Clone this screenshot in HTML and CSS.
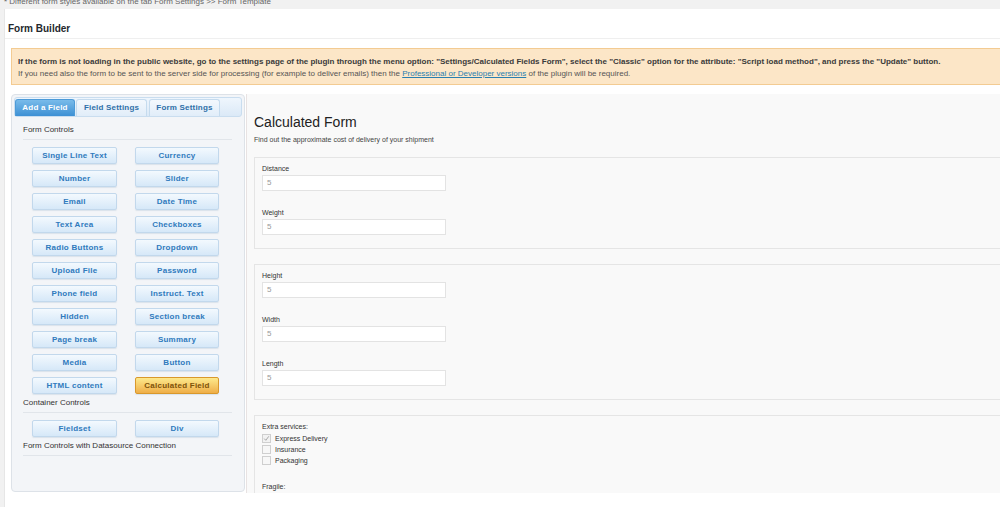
FILE: index.html
```html
<!DOCTYPE html>
<html>
<head>
<meta charset="utf-8">
<link rel="stylesheet" href="styles.css">
</head>
<body>
<div class="topnote">* Different form styles available on the tab Form Settings &gt;&gt; Form Template</div>
<div class="wrap">
  <div class="hdr"><h2 class="hdr-title">Form Builder</h2></div>
  <div class="inner">
    <div class="notice">
      <p class="notice-b">If the form is not loading in the public website, go to the settings page of the plugin through the menu option: "Settings/Calculated Fields Form", select the "Classic" option for the attribute: "Script load method", and press the "Update" button.</p>
      <p class="notice-r">If you need also the form to be sent to the server side for processing (for example to deliver emails) then the <a class="notice-link">Professional or Developer versions</a> of the plugin will be required.</p>
    </div>
    <div class="builder">
      <div class="tabs-panel">
        <div class="tabbar">
          <span class="tab tab-active tab-w1">Add a Field</span>
          <span class="tab tab-w2">Field Settings</span>
          <span class="tab tab-w3">Form Settings</span>
        </div>
        <div class="controls">
          <div class="group-title group-first">Form Controls</div>
          <div class="btns">
            <span class="btn">Single Line Text</span>
            <span class="btn">Currency</span>
            <span class="btn">Number</span>
            <span class="btn">Slider</span>
            <span class="btn">Email</span>
            <span class="btn">Date Time</span>
            <span class="btn">Text Area</span>
            <span class="btn">Checkboxes</span>
            <span class="btn">Radio Buttons</span>
            <span class="btn">Dropdown</span>
            <span class="btn">Upload File</span>
            <span class="btn">Password</span>
            <span class="btn">Phone field</span>
            <span class="btn">Instruct. Text</span>
            <span class="btn">Hidden</span>
            <span class="btn">Section break</span>
            <span class="btn">Page break</span>
            <span class="btn">Summary</span>
            <span class="btn">Media</span>
            <span class="btn">Button</span>
            <span class="btn">HTML content</span>
            <span class="btn btn-calc">Calculated Field</span>
          </div>
          <div class="group-title">Container Controls</div>
          <div class="btns">
            <span class="btn">Fieldset</span>
            <span class="btn">Div</span>
          </div>
          <div class="group-title">Form Controls with Datasource Connection</div>
        </div>
      </div>
      <div class="preview">
        <h1 class="form-title">Calculated Form</h1>
        <p class="form-sub">Find out the approximate cost of delivery of your shipment</p>
        <div class="fset">
          <div class="field">
            <div class="flabel">Distance</div>
            <div class="finput">5</div>
          </div>
          <div class="field">
            <div class="flabel">Weight</div>
            <div class="finput">5</div>
          </div>
        </div>
        <div class="fset">
          <div class="field">
            <div class="flabel">Height</div>
            <div class="finput">5</div>
          </div>
          <div class="field">
            <div class="flabel">Width</div>
            <div class="finput">5</div>
          </div>
          <div class="field">
            <div class="flabel">Length</div>
            <div class="finput">5</div>
          </div>
        </div>
        <div class="fset">
          <div class="flabel">Extra services:</div>
          <div class="chk-row">
            <svg class="chk" width="9" height="9" viewBox="0 0 9 9"><rect x="0.5" y="0.5" width="8" height="8" fill="#f2f2f2" stroke="#cfcfcf"/><polyline points="2.2,4.6 3.8,6.3 6.8,2.3" fill="none" stroke="#a8a8a8" stroke-width="1"/></svg>
            <span class="chk-label">Express Delivery</span>
          </div>
          <div class="chk-row">
            <svg class="chk" width="9" height="9" viewBox="0 0 9 9"><rect x="0.5" y="0.5" width="8" height="8" fill="#f7f7f7" stroke="#cfcfcf"/></svg>
            <span class="chk-label">Insurance</span>
          </div>
          <div class="chk-row">
            <svg class="chk" width="9" height="9" viewBox="0 0 9 9"><rect x="0.5" y="0.5" width="8" height="8" fill="#f7f7f7" stroke="#cfcfcf"/></svg>
            <span class="chk-label">Packaging</span>
          </div>
          <div class="flabel flabel-fragile">Fragile:</div>
        </div>
      </div>
    </div>
  </div>
</div>
</body>
</html>
```

FILE: styles.css
```css
html, body {
  margin: 0;
  padding: 0;
  overflow: hidden;
}
body {
  background: #f1f1f1;
  font-family: "Liberation Sans", Arial, sans-serif;
  color: #333;
  width: 1000px;
  height: 507px;
}
.topnote {
  margin-top: -3px;
  height: 12px;
  line-height: 10px;
  padding-left: 4px;
  font-size: 8px;
  color: #666;
  white-space: nowrap;
}
.wrap {
  margin-left: 4px;
  width: 1200px;
  height: 499px;
  background: #fff;
  border-left: 1px solid #e6e6e6;
}
.hdr {
  height: 30px;
  box-sizing: border-box;
  padding: 13px 0 0 3px;
  border-bottom: 1px solid #efefef;
}
.hdr-title {
  margin: 0;
  font-size: 10px;
  line-height: 14px;
  font-weight: bold;
  color: #23282d;
}
.inner {
  padding-left: 6px;
}
.notice {
  margin-top: 9px;
  width: 1100px;
  background: #fce6c7;
  border: 1px solid #f3cb92;
  padding: 7px 6px 5px;
  font-size: 8px;
  white-space: nowrap;
}
.notice p {
  margin: 0;
}
.notice-b {
  font-weight: bold;
  line-height: 12px;
  color: #3a3a3a;
}
.notice-r {
  line-height: 11px;
  color: #555;
}
.notice-link {
  color: #2a7fb0;
  text-decoration: underline;
}
.builder {
  margin-top: 9px;
  display: flex;
  align-items: flex-start;
}
.tabs-panel {
  width: 234px;
  height: 398px;
  box-sizing: border-box;
  border: 1px solid #dde2e8;
  border-radius: 4px;
  background: #f3f5f8;
  padding: 2px;
  flex: none;
}
.tabbar {
  height: 20px;
  box-sizing: border-box;
  border: 1px solid #c9ddef;
  border-radius: 3px;
  background: linear-gradient(#eff6fd, #dbe9f7);
  padding: 1px 0 0 0;
  display: flex;
  gap: 1px;
}
.tab {
  height: 17px;
  box-sizing: border-box;
  border: 1px solid #c5dbee;
  border-bottom: none;
  border-radius: 3px 3px 0 0;
  background: linear-gradient(#f3f8fd, #e1edf9);
  color: #2e6fa8;
  font-size: 8px;
  font-weight: bold;
  line-height: 16px;
  text-align: center;
  letter-spacing: 0.2px;
}
.tab-active {
  background: linear-gradient(#79bbea, #3d90d4);
  border-color: #4d9bd8;
  color: #fff;
}
.tab-w1 { width: 60px; }
.tab-w2 { width: 71px; }
.tab-w3 { width: 71px; margin-left: 1px; }
.controls {
  padding: 0 10px 0 9px;
}
.group-title {
  margin-top: 4px;
  padding-bottom: 4px;
  border-bottom: 1px solid #e1e5ea;
  font-size: 8px;
  line-height: 10px;
  color: #333;
}
.group-first {
  margin-top: 8px;
  padding-bottom: 4px;
}
.btns {
  margin-top: 7px;
  padding-left: 9px;
  display: grid;
  grid-template-columns: 85px 84px;
  column-gap: 18px;
  row-gap: 6px;
}
.btn {
  display: block;
  height: 17px;
  box-sizing: border-box;
  border: 1px solid #c2d8ec;
  border-radius: 2px;
  background: linear-gradient(#f3f9fe, #d6e8f8);
  box-shadow: 0 1px 1px rgba(80, 120, 160, 0.15);
  color: #2f7abd;
  font-size: 8px;
  font-weight: bold;
  line-height: 15px;
  text-align: center;
  letter-spacing: 0.25px;
  white-space: nowrap;
}
.btn-calc {
  border-color: #d9982c;
  background: linear-gradient(#fde98c, #efae48);
  color: #7e5208;
}
.preview {
  flex: 1;
  margin-left: 1px;
  height: 399px;
  box-sizing: border-box;
  border-left: 1px solid #e8e2e2;
  background: #f9f9f9;
  padding: 19px 0 0 7px;
  overflow: hidden;
}
.form-title {
  margin: 0;
  font-size: 14px;
  line-height: 18px;
  font-weight: normal;
  color: #222;
}
.form-sub {
  margin: 4px 0 0;
  font-size: 7px;
  line-height: 10px;
  color: #444;
}
.fset {
  margin-top: 12px;
  border: 1px solid #e5e5e5;
  padding: 6px 0 13px 7px;
}
.fset + .fset {
  margin-top: 15px;
}
.field + .field {
  margin-top: 17px;
}
.flabel {
  font-size: 7px;
  line-height: 10px;
  color: #333;
  margin-bottom: 1px;
}
.finput {
  width: 184px;
  height: 16px;
  box-sizing: border-box;
  border: 1px solid #e3e3e3;
  background: #fff;
  padding-left: 4px;
  font-size: 8px;
  line-height: 14px;
  color: #9a9a9a;
}
.chk-row {
  display: flex;
  align-items: center;
  height: 11px;
}
.chk {
  display: block;
  flex: none;
}
.chk-label {
  margin-left: 4px;
  font-size: 7px;
  line-height: 11px;
  color: #333;
}
.flabel-fragile {
  margin-top: 16px;
}
```
